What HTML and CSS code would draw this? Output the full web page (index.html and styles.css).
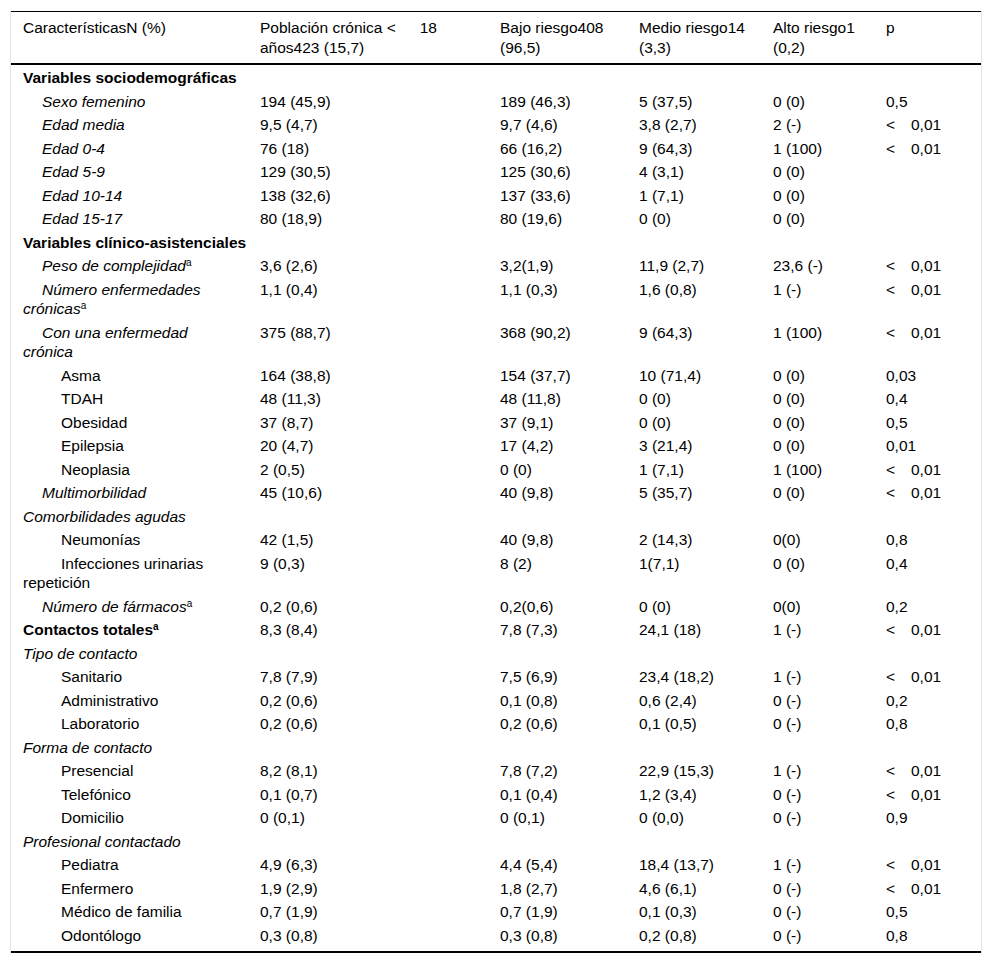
FILE: index.html
```html
<!DOCTYPE html>
<html lang="es">
<head>
<meta charset="utf-8">
<title>Tabla</title>
<link rel="stylesheet" href="styles.css">
</head>
<body>
<div class="wrap">
<table class="tbl">
<colgroup>
<col class="c1"><col class="c2"><col class="c3"><col class="c4"><col class="c5"><col class="c6">
</colgroup>
<thead>
<tr>
<th>CaracterísticasN (%)</th>
<th>Población crónica <span class="lt h">&lt;</span>18 años423 (15,7)</th>
<th>Bajo riesgo408 (96,5)</th>
<th>Medio riesgo14 (3,3)</th>
<th>Alto riesgo1 (0,2)</th>
<th>p</th>
</tr>
</thead>
<tbody>
<tr class="sec"><td colspan="6">Variables sociodemográficas</td></tr>
<tr><td class="l1">Sexo femenino</td><td>194 (45,9)</td><td>189 (46,3)</td><td>5 (37,5)</td><td>0 (0)</td><td>0,5</td></tr>
<tr><td class="l1">Edad media</td><td>9,5 (4,7)</td><td>9,7 (4,6)</td><td>3,8 (2,7)</td><td>2 (-)</td><td><span class="lt">&lt;</span>0,01</td></tr>
<tr><td class="l1">Edad 0-4</td><td>76 (18)</td><td>66 (16,2)</td><td>9 (64,3)</td><td>1 (100)</td><td><span class="lt">&lt;</span>0,01</td></tr>
<tr><td class="l1">Edad 5-9</td><td>129 (30,5)</td><td>125 (30,6)</td><td>4 (3,1)</td><td>0 (0)</td><td></td></tr>
<tr><td class="l1">Edad 10-14</td><td>138 (32,6)</td><td>137 (33,6)</td><td>1 (7,1)</td><td>0 (0)</td><td></td></tr>
<tr><td class="l1">Edad 15-17</td><td>80 (18,9)</td><td>80 (19,6)</td><td>0 (0)</td><td>0 (0)</td><td></td></tr>
<tr class="sec"><td colspan="6">Variables clínico-asistenciales</td></tr>
<tr><td class="l1">Peso de complejidad<sup>a</sup></td><td>3,6 (2,6)</td><td>3,2(1,9)</td><td>11,9 (2,7)</td><td>23,6 (-)</td><td><span class="lt">&lt;</span>0,01</td></tr>
<tr><td class="l1">Número enfermedades crónicas<sup>a</sup></td><td>1,1 (0,4)</td><td>1,1 (0,3)</td><td>1,6 (0,8)</td><td>1 (-)</td><td><span class="lt">&lt;</span>0,01</td></tr>
<tr><td class="l1">Con una enfermedad crónica</td><td>375 (88,7)</td><td>368 (90,2)</td><td>9 (64,3)</td><td>1 (100)</td><td><span class="lt">&lt;</span>0,01</td></tr>
<tr><td class="l2">Asma</td><td>164 (38,8)</td><td>154 (37,7)</td><td>10 (71,4)</td><td>0 (0)</td><td>0,03</td></tr>
<tr><td class="l2">TDAH</td><td>48 (11,3)</td><td>48 (11,8)</td><td>0 (0)</td><td>0 (0)</td><td>0,4</td></tr>
<tr><td class="l2">Obesidad</td><td>37 (8,7)</td><td>37 (9,1)</td><td>0 (0)</td><td>0 (0)</td><td>0,5</td></tr>
<tr><td class="l2">Epilepsia</td><td>20 (4,7)</td><td>17 (4,2)</td><td>3 (21,4)</td><td>0 (0)</td><td>0,01</td></tr>
<tr><td class="l2">Neoplasia</td><td>2 (0,5)</td><td>0 (0)</td><td>1 (7,1)</td><td>1 (100)</td><td><span class="lt">&lt;</span>0,01</td></tr>
<tr><td class="l1">Multimorbilidad</td><td>45 (10,6)</td><td>40 (9,8)</td><td>5 (35,7)</td><td>0 (0)</td><td><span class="lt">&lt;</span>0,01</td></tr>
<tr><td class="sub" colspan="6">Comorbilidades agudas</td></tr>
<tr><td class="l2">Neumonías</td><td>42 (1,5)</td><td>40 (9,8)</td><td>2 (14,3)</td><td>0(0)</td><td>0,8</td></tr>
<tr><td class="l2">Infecciones urinarias repetición</td><td>9 (0,3)</td><td>8 (2)</td><td>1(7,1)</td><td>0 (0)</td><td>0,4</td></tr>
<tr><td class="l1">Número de fármacos<sup>a</sup></td><td>0,2 (0,6)</td><td>0,2(0,6)</td><td>0 (0)</td><td>0(0)</td><td>0,2</td></tr>
<tr><td class="b">Contactos totales<sup>a</sup></td><td>8,3 (8,4)</td><td>7,8 (7,3)</td><td>24,1 (18)</td><td>1 (-)</td><td><span class="lt">&lt;</span>0,01</td></tr>
<tr><td class="sub" colspan="6">Tipo de contacto</td></tr>
<tr><td class="l2">Sanitario</td><td>7,8 (7,9)</td><td>7,5 (6,9)</td><td>23,4 (18,2)</td><td>1 (-)</td><td><span class="lt">&lt;</span>0,01</td></tr>
<tr><td class="l2">Administrativo</td><td>0,2 (0,6)</td><td>0,1 (0,8)</td><td>0,6 (2,4)</td><td>0 (-)</td><td>0,2</td></tr>
<tr><td class="l2">Laboratorio</td><td>0,2 (0,6)</td><td>0,2 (0,6)</td><td>0,1 (0,5)</td><td>0 (-)</td><td>0,8</td></tr>
<tr><td class="sub" colspan="6">Forma de contacto</td></tr>
<tr><td class="l2">Presencial</td><td>8,2 (8,1)</td><td>7,8 (7,2)</td><td>22,9 (15,3)</td><td>1 (-)</td><td><span class="lt">&lt;</span>0,01</td></tr>
<tr><td class="l2">Telefónico</td><td>0,1 (0,7)</td><td>0,1 (0,4)</td><td>1,2 (3,4)</td><td>0 (-)</td><td><span class="lt">&lt;</span>0,01</td></tr>
<tr><td class="l2">Domicilio</td><td>0 (0,1)</td><td>0 (0,1)</td><td>0 (0,0)</td><td>0 (-)</td><td>0,9</td></tr>
<tr><td class="sub" colspan="6">Profesional contactado</td></tr>
<tr><td class="l2">Pediatra</td><td>4,9 (6,3)</td><td>4,4 (5,4)</td><td>18,4 (13,7)</td><td>1 (-)</td><td><span class="lt">&lt;</span>0,01</td></tr>
<tr><td class="l2">Enfermero</td><td>1,9 (2,9)</td><td>1,8 (2,7)</td><td>4,6 (6,1)</td><td>0 (-)</td><td><span class="lt">&lt;</span>0,01</td></tr>
<tr><td class="l2">Médico de familia</td><td>0,7 (1,9)</td><td>0,7 (1,9)</td><td>0,1 (0,3)</td><td>0 (-)</td><td>0,5</td></tr>
<tr><td class="l2">Odontólogo</td><td>0,3 (0,8)</td><td>0,3 (0,8)</td><td>0,2 (0,8)</td><td>0 (-)</td><td>0,8</td></tr>
</tbody>
</table>
</div>
</body>
</html>
```
FILE: styles.css
```css
html, body {
  margin: 0;
  padding: 0;
  background: #fff;
}
body {
  font-family: "Liberation Sans", Arial, sans-serif;
  font-size: 15.5px;
  color: #000;
}
.wrap {
  margin: 11px 0 0 10px;
  width: 970px;
  border-left: 1px solid #e6e6e6;
  border-right: 1px solid #e6e6e6;
}
.tbl {
  width: 970px;
  table-layout: fixed;
  border-collapse: collapse;
  border-top: 1px solid #000;
  border-bottom: 2px solid #000;
}
.c1 { width: 237px; }
.c2 { width: 240px; }
.c3 { width: 139px; }
.c4 { width: 134px; }
.c5 { width: 113px; }
.c6 { width: 107px; }
th, td {
  text-align: left;
  vertical-align: top;
  line-height: 19.5px;
  padding: 2px 12px 2px 12px;
}
th {
  font-weight: normal;
  padding-top: 6px;
  padding-bottom: 6px;
  border-bottom: 2px solid #000;
}
tbody tr:first-child td { padding-top: 3px; }
tbody tr:last-child td { padding-bottom: 6px; }
.sec td,
.b {
  font-weight: bold;
}
.l1 {
  font-style: italic;
  text-indent: 19px;
}
.l2 {
  text-indent: 38px;
}
.sub {
  font-style: italic;
}
sup {
  font-size: 10px;
  line-height: 0;
  vertical-align: 5px;
  font-style: normal;
}
.lt {
  display: inline-block;
  width: 25px;
  text-indent: 0;
}
.lt.h {
  width: 33px;
}
```
